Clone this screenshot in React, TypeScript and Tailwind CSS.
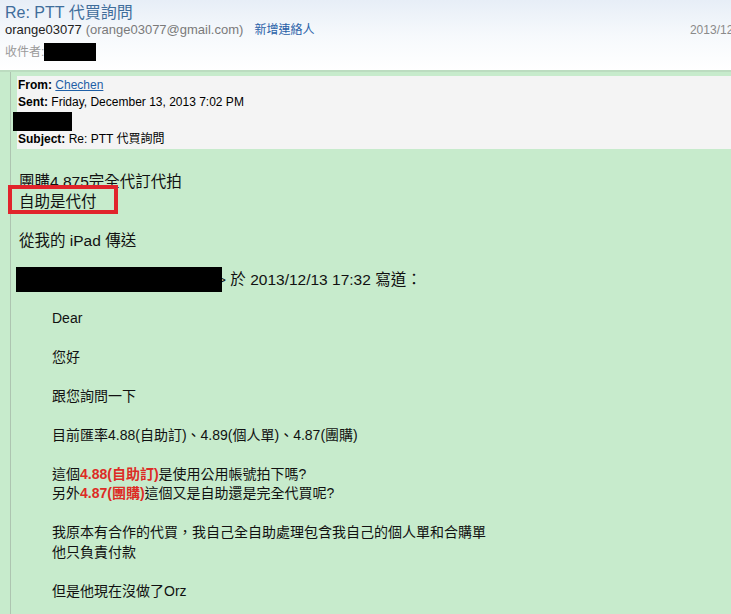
const SANS = "font-['Liberation_Sans','Noto_Sans_CJK_TC',sans-serif]";

function MailHeader() {
  return (
    <div className="h-[70px] bg-gradient-to-b from-[#e7eef7] via-[#f6f9fc] to-white px-[5px] pt-[3px]">
      <div className="text-[16px] leading-[19px] text-[#3f6d9b]">Re: PTT 代買詢問</div>
      <div className="flex items-center text-[13px] leading-[16px]">
        <span className="text-[#222]">orange03077</span>
        <span className="ml-[4px] text-[#7a7a7a]">(orange03077@gmail.com)</span>
        <span className="ml-[11px] text-[12px] text-[#2a62a8]">新增連絡人</span>
        <span className="ml-auto -mr-[24px] text-[12px] text-[#8a8a8a]">2013/12/14</span>
      </div>
      <div className="mt-[5px] flex items-center text-[12px] leading-[18px] text-[#9a9a9a]">
        <span>收件者:</span>
        <span className="h-[18px] w-[52px] bg-black" />
      </div>
    </div>
  );
}

function QuoteHeader() {
  return (
    <div className="bg-[#f4f4f4] pb-[1px] pl-[1px] pt-[1px] text-[12px] leading-[17px] text-black">
      <div>
        <b>From:</b> <span className="text-[#1f5fa6] underline">Chechen</span>
      </div>
      <div>
        <b>Sent:</b> Friday, December 13, 2013 7:02 PM
      </div>
      <div className="-ml-[5px] mt-[1px] h-[19px] w-[59px] bg-black" />
      <div>
        <b>Subject:</b> Re: PTT 代買詢問
      </div>
    </div>
  );
}

function Red({ children }: { children: React.ReactNode }) {
  return <b className="text-[#dd2b25]">{children}</b>;
}

export default function App() {
  return (
    <div className={`relative h-[614px] w-[731px] overflow-hidden bg-white ${SANS}`}>
      <MailHeader />
      <div className="flex h-[544px] border-t-2 border-[#bcdcc0] bg-[#c7ebcc]">
        <div className="w-[11px] shrink-0 border-r border-[#adc4b0]" />
        <div className="flex-1 pl-[6px] pt-[4px]">
          <QuoteHeader />
          <div className="mt-[23px] pl-[2px] text-[15.5px] leading-[19.5px] text-[#111]">
            <div>團購4.875完全代訂代拍</div>
            <div>自助是代付</div>
            <div className="mt-[19.5px]">從我的 iPad 傳送</div>
            <div className="mt-[19.5px] flex h-[19.5px] items-center">
              <span className="relative z-10 -ml-[3px] h-[25px] w-[206px] shrink-0 bg-black" />
              <span className="-ml-[5px] whitespace-pre">{"> 於 2013/12/13 17:32 寫道："}</span>
            </div>
            <div className="mt-[19.5px] pl-[33px] text-[14px]">
              <div>Dear</div>
              <div className="mt-[19.5px]">您好</div>
              <div className="mt-[19.5px]">跟您詢問一下</div>
              <div className="mt-[19.5px]">目前匯率4.88(自助訂)、4.89(個人單)、4.87(團購)</div>
              <div className="mt-[19.5px]">
                這個<Red>4.88(自助訂)</Red>是使用公用帳號拍下嗎?
              </div>
              <div>
                另外<Red>4.87(團購)</Red>這個又是自助還是完全代買呢?
              </div>
              <div className="mt-[19.5px]">我原本有合作的代買，我自己全自助處理包含我自己的個人單和合購單</div>
              <div>他只負責付款</div>
              <div className="mt-[19.5px]">但是他現在沒做了Orz</div>
            </div>
          </div>
        </div>
      </div>
      <div className="absolute left-[8px] top-[185px] h-[29px] w-[110px] border-4 border-[#e1242b]" />
    </div>
  );
}
